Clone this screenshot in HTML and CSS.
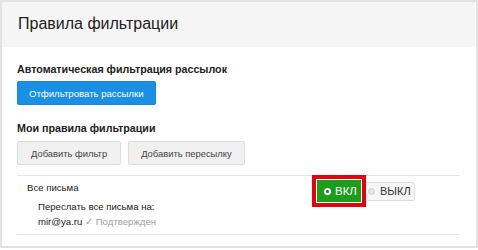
FILE: index.html
```html
<!DOCTYPE html>
<html lang="ru">
<head>
    <meta charset="UTF-8">
    <title>Правила фильтрации</title>
    <link rel="stylesheet" href="styles.css">
</head>
<body>
    <div class="panel">
        <div class="panel-head">
            <h1>Правила фильтрации</h1>
        </div>

        <div class="panel-body">
            <h2>Автоматическая фильтрация рассылок</h2>
            <button type="button" class="btn btn-blue">Отфильтровать рассылки</button>

            <h2 class="second">Мои правила фильтрации</h2>
            <div class="btn-row">
                <button type="button" class="btn">Добавить фильтр</button>
                <button type="button" class="btn">Добавить пересылку</button>
            </div>

            <div class="rule">
                <div class="rule-info">
                    <div class="rule-name">Все письма</div>
                    <div class="rule-action">
                        <div>Переслать все письма на:</div>
                        <div>mir@ya.ru <span class="ok">&#10003; Подтвержден</span></div>
                    </div>
                </div>

                <!-- переключатель вкл / выкл -->
                <div class="switch">
                    <button type="button" class="sw sw-on"><i class="dot"></i>ВКЛ</button>
                    <button type="button" class="sw sw-off"><i class="dot"></i>ВЫКЛ</button>
                </div>
            </div>
        </div>
    </div>
</body>
</html>
```

FILE: styles.css
```css
body {
    margin: 0;
    font-family: 'Liberation Sans', Arial, sans-serif;
    color: #333;
    background: #fff;
}

.panel {
    width: 474px;
    height: 244px;
    border: 2px solid #e2e2e2;
    background: #fff;
}

.panel-head {
    background-color: #f5f5f5;
    height: 45px;
    margin-right: 1px;
    padding: 0 16px;
    display: flex;
    align-items: center;
}

h1 {
    margin: 0 0 1px;
    font-size: 16px;
    font-weight: normal;
    color: #222;
}

.panel-body {
    padding: 16px 14px 0 15px;
}

h2 {
    margin: 0 0 6px;
    font-size: 10.7px;
    font-weight: bold;
    color: #222;
}

h2.second {
    margin-top: 17px;
    margin-bottom: 7px;
}

.btn {
    font-family: inherit;
    font-size: 9.4px;
    height: 24px;
    padding: 0 12px;
    border: 1px solid #dcdcdc;
    border-radius: 2px;
    background: #f0f0f0;
    color: #444;
    cursor: pointer;
}

.btn-blue {
    padding: 0 11px;
    font-size: 9.6px;
    background-color: #1a8fe3;
    border-color: #1888d8;
    color: #fff;
}

.btn-row {
    display: flex;
    gap: 7px;
}

.btn-row .btn:first-child {
    padding: 0 13px;
}

.rule {
    display: grid;
    grid-template-columns: 300px auto;
    margin-top: 10px;
    width: 443px;
    height: 58px;
    border-top: 1px solid #e5e5e5;
    border-bottom: 1px solid #e5e5e5;
    font-size: 9.6px;
}

.rule-name {
    margin: 6px 0 0 10px;
    color: #222;
}

.rule-action {
    margin: 6px 0 0 21px;
    line-height: 15px;
    color: #222;
}

.ok {
    color: #a0a0a0;
}

.switch {
    display: flex;
    align-items: center;
    height: 22px;
    margin-top: 4px;
}

.sw {
    font-family: inherit;
    display: flex;
    align-items: center;
    border-radius: 2px;
    cursor: pointer;
}

/* красная рамка вокруг активной кнопки */
.sw-on {
    position: relative;
    z-index: 1;
    width: 44px;
    height: 22px;
    gap: 4px;
    padding: 0 0 0 7px;
    font-size: 11.5px;
    background-color: #1c9e1c;
    border: none;
    border-radius: 0;
    color: #fff;
    box-shadow: 0 0 0 1px #fff, 0 0 0 5px #e3000f;
}

.sw-off {
    width: 51px;
    height: 19px;
    gap: 5px;
    margin-left: 3px;
    padding: 0 0 0 3px;
    font-size: 11px;
    background: #f6f6f6;
    border: 1px solid #ddd;
    color: #333;
}

.dot {
    width: 7px;
    height: 7px;
    border-radius: 50%;
    box-sizing: border-box;
    border: 2px solid #fff;
    background: #4a4a4a;
}

.sw-off .dot {
    border: 1px solid #cfcfcf;
    background: #e6e6e6;
}
```
